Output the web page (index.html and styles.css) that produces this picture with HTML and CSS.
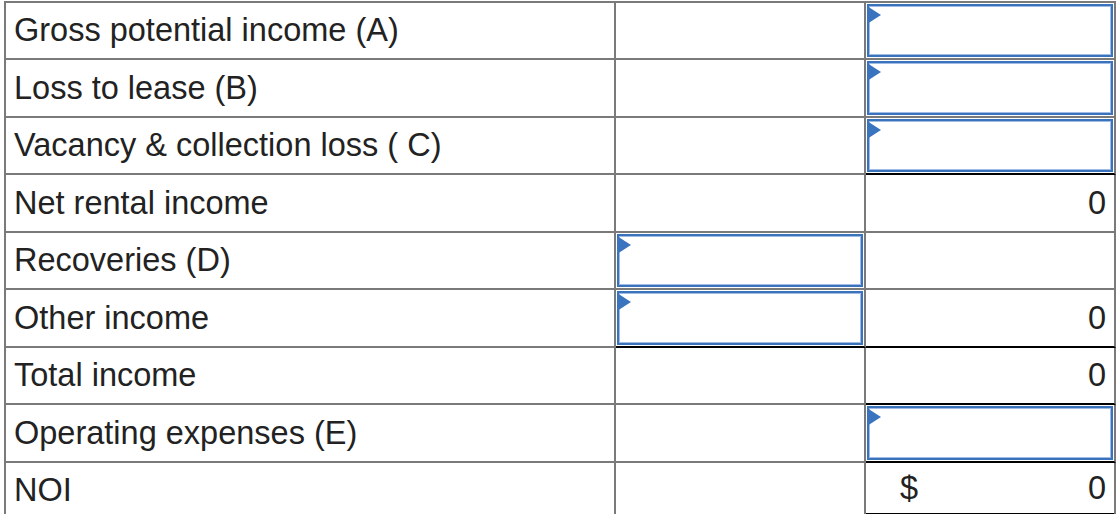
FILE: index.html
```html
<!DOCTYPE html>
<html>
<head>
<meta charset="utf-8">
<link rel="stylesheet" href="styles.css">
</head>
<body>
<div class="sheet">
  <div class="cell label">Gross potential income (A)</div>
  <div class="cell"></div>
  <div class="cell input-cell"><div class="entry"></div></div>

  <div class="cell label">Loss to lease (B)</div>
  <div class="cell"></div>
  <div class="cell input-cell"><div class="entry"></div></div>

  <div class="cell label">Vacancy &amp; collection loss ( C)</div>
  <div class="cell"></div>
  <div class="cell input-cell sum"><div class="entry"></div></div>

  <div class="cell label">Net rental income</div>
  <div class="cell"></div>
  <div class="cell num">0</div>

  <div class="cell label">Recoveries (D)</div>
  <div class="cell input-cell"><div class="entry"></div></div>
  <div class="cell"></div>

  <div class="cell label">Other income</div>
  <div class="cell input-cell sum"><div class="entry"></div></div>
  <div class="cell num sum">0</div>

  <div class="cell label">Total income</div>
  <div class="cell"></div>
  <div class="cell num sum">0</div>

  <div class="cell label">Operating expenses (E)</div>
  <div class="cell"></div>
  <div class="cell input-cell sum"><div class="entry"></div></div>

  <div class="cell label">NOI</div>
  <div class="cell"></div>
  <div class="cell num total"><span class="currency">$</span><span>0</span></div>
</div>
</body>
</html>
```

FILE: styles.css
```css
html, body {
  margin: 0;
  padding: 0;
  background: #fff;
}

body {
  font-family: "Liberation Sans", Arial, sans-serif;
  color: #222;
}

.sheet {
  display: grid;
  grid-template-columns: 610px 250px 250px;
  grid-template-rows: 57px 58px 57px 58px 57px 58px 57px 58px 57px;
  margin: 1px 0 0 4px;
  width: max-content;
  border-top: 2px solid #7a7a7a;
  border-left: 2px solid #7a7a7a;
}

.cell {
  border-right: 2px solid #7a7a7a;
  border-bottom: 2px solid #7a7a7a;
  display: flex;
  align-items: center;
  font-size: 32.5px;
  min-width: 0;
}

.label {
  padding-left: 8px;
}

.num {
  justify-content: flex-end;
  padding-right: 8px;
}

.total {
  justify-content: space-between;
  padding-left: 34px;
  border-bottom: 7px double #000;
}

.sum {
  border-bottom-color: #000;
}

.input-cell {
  align-items: stretch;
  padding: 1px;
}

.entry {
  flex: 1;
  position: relative;
  border: 2px solid #3b73bb;
  box-shadow: inset 0 0 0 1px #9dbbe6;
  background: #fff;
}

.entry::before {
  content: "";
  position: absolute;
  left: -2px;
  top: 0;
  width: 0;
  height: 0;
  border-top: 9px solid transparent;
  border-bottom: 9px solid transparent;
  border-left: 14px solid #3a74be;
}
```
